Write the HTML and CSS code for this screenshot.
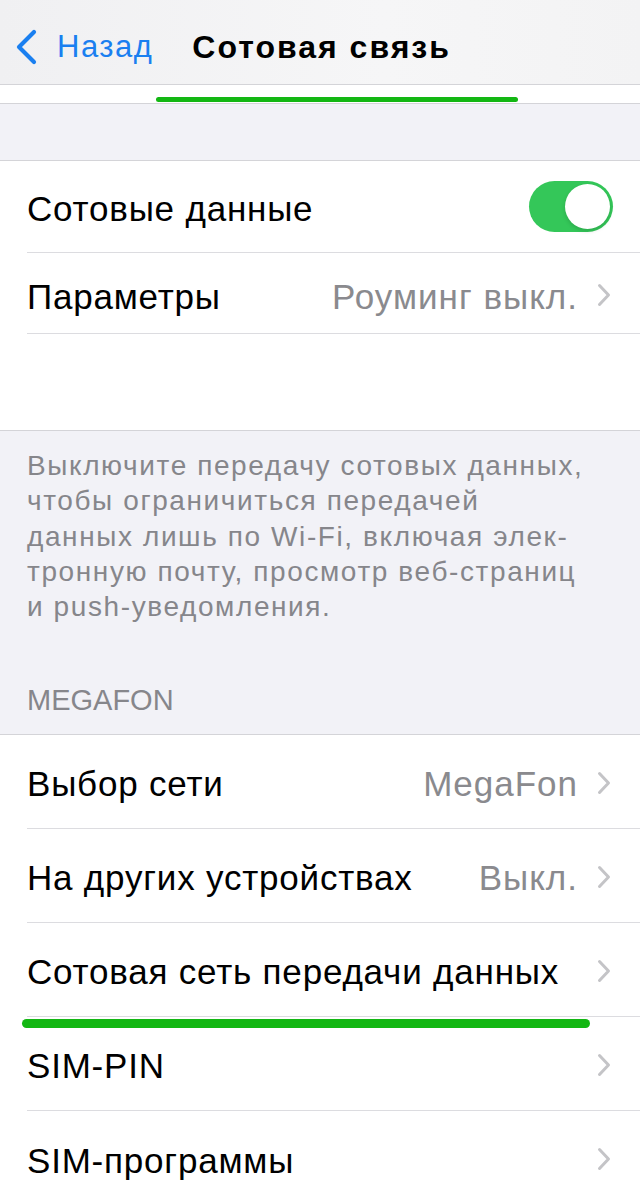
FILE: index.html
```html
<!DOCTYPE html>
<html lang="ru">
<head>
<meta charset="utf-8">
<link rel="stylesheet" href="styles.css">
</head>
<body>
<div class="page">
  <header class="nav">
    <div class="back">
      <svg class="back-chev" width="24" height="36" viewBox="0 0 24 36"><path d="M20 3 L5 18 L20 33" fill="none" stroke="#1a7ff0" stroke-width="4.2" stroke-linecap="round" stroke-linejoin="round"/></svg>
      <span class="back-text">Назад</span>
    </div>
    <div class="title">Сотовая связь</div>
  </header>
  <div class="strip"><span class="mark mark-top"></span></div>
  <div class="spacer"></div>

  <section class="group">
    <div class="row row-a">
      <span class="label">Сотовые данные</span>
      <span class="toggle"><span class="knob"></span></span>
    </div>
    <div class="row row-b">
      <span class="label">Параметры</span>
      <span class="value">Роуминг выкл.</span>
      <svg class="chev" width="14" height="24" viewBox="0 0 14 24"><path d="M2.5 2.5 L11.5 12 L2.5 21.5" fill="none" stroke="#c4c4c7" stroke-width="3" stroke-linecap="round" stroke-linejoin="round"/></svg>
    </div>
    <div class="row row-c"></div>
  </section>

  <div class="footer">Выключите передачу сотовых данных,<br>чтобы ограничиться передачей<br>данных лишь по Wi-Fi, включая элек-<br>тронную почту, просмотр веб-страниц<br>и push-уведомления.</div>

  <div class="section-head">MEGAFON</div>

  <section class="group">
    <div class="row">
      <span class="label">Выбор сети</span>
      <span class="value">MegaFon</span>
      <svg class="chev" width="14" height="24" viewBox="0 0 14 24"><path d="M2.5 2.5 L11.5 12 L2.5 21.5" fill="none" stroke="#c4c4c7" stroke-width="3" stroke-linecap="round" stroke-linejoin="round"/></svg>
    </div>
    <div class="row">
      <span class="label">На других устройствах</span>
      <span class="value">Выкл.</span>
      <svg class="chev" width="14" height="24" viewBox="0 0 14 24"><path d="M2.5 2.5 L11.5 12 L2.5 21.5" fill="none" stroke="#c4c4c7" stroke-width="3" stroke-linecap="round" stroke-linejoin="round"/></svg>
    </div>
    <div class="row">
      <span class="label">Сотовая сеть передачи данных</span>
      <svg class="chev" width="14" height="24" viewBox="0 0 14 24"><path d="M2.5 2.5 L11.5 12 L2.5 21.5" fill="none" stroke="#c4c4c7" stroke-width="3" stroke-linecap="round" stroke-linejoin="round"/></svg>
      <span class="mark mark-bottom"></span>
    </div>
    <div class="row">
      <span class="label">SIM-PIN</span>
      <svg class="chev" width="14" height="24" viewBox="0 0 14 24"><path d="M2.5 2.5 L11.5 12 L2.5 21.5" fill="none" stroke="#c4c4c7" stroke-width="3" stroke-linecap="round" stroke-linejoin="round"/></svg>
    </div>
    <div class="row">
      <span class="label">SIM-программы</span>
      <svg class="chev" width="14" height="24" viewBox="0 0 14 24"><path d="M2.5 2.5 L11.5 12 L2.5 21.5" fill="none" stroke="#c4c4c7" stroke-width="3" stroke-linecap="round" stroke-linejoin="round"/></svg>
    </div>
  </section>
</div>
</body>
</html>
```

FILE: styles.css
```css
* { box-sizing: border-box; }
html, body { margin: 0; padding: 0; }
body {
  background: #f2f2f7;
  font-family: "Liberation Sans", Arial, sans-serif;
  color: #000;
  width: 640px;
  overflow: hidden;
}
.page { width: 640px; }

.nav {
  height: 85px;
  background: linear-gradient(90deg, #f0f0f2 0%, #f6f6f7 60%, #f3f3f4 100%);
  border-bottom: 1px solid #d4d4d8;
  display: flex;
  align-items: center;
  padding-left: 14px;
  padding-top: 10px;
}
.back { display: flex; align-items: center; }
.back-chev { display: block; }
.back-text {
  color: #1a7ff0;
  font-size: 31px;
  margin-left: 19px;
  letter-spacing: 1.5px;
}
.title {
  margin-left: 39px;
  font-size: 32px;
  font-weight: bold;
  letter-spacing: 2px;
}

.strip {
  height: 19px;
  background: #fff;
  border-bottom: 1px solid #d4d4d8;
  position: relative;
}
.mark {
  position: absolute;
  background: #13b713;
  border-radius: 5px;
}
.mark-top { left: 156px; width: 362px; top: 12px; height: 5px; }

.spacer { height: 56px; }

.group {
  background: #fff;
  border-top: 1px solid #d4d4d8;
  border-bottom: 1px solid #d4d4d8;
}
.row {
  height: 94px;
  margin-left: 27px;
  padding-right: 29px;
  padding-top: 5px;
  display: flex;
  align-items: center;
  border-bottom: 1px solid #dcdce0;
  position: relative;
}
.row:last-child { border-bottom: none; }
.row-a { height: 92px; padding-top: 4px; }
.row-b { height: 81px; padding-top: 7px; }
.row-c { height: 96px; }

.label {
  font-size: 35px;
  flex: 1;
  white-space: nowrap;
  letter-spacing: 0.8px;
}
.value {
  font-size: 35px;
  color: #8a8a8e;
  margin-right: 19px;
  white-space: nowrap;
  letter-spacing: 1px;
}
.chev { display: block; flex: none; margin-top: -3px; }
.toggle {
  width: 84px;
  height: 51px;
  border-radius: 26px;
  background: #34c759;
  position: relative;
  margin-right: -2px;
  margin-top: -4px;
}
.knob {
  position: absolute;
  right: 3px;
  top: 3px;
  width: 45px;
  height: 45px;
  border-radius: 50%;
  background: #fff;
  box-shadow: 0 2px 4px rgba(0,0,0,0.15);
}
.mark-bottom { left: -5px; width: 568px; bottom: -12px; height: 9px; z-index: 2; }

.footer {
  padding: 17px 27px 0;
  font-size: 28px;
  line-height: 35.3px;
  color: #86868b;
  letter-spacing: 1.6px;
  white-space: nowrap;
}
.section-head {
  padding: 61px 27px 19px;
  font-size: 29px;
  color: #86868b;
  line-height: 30px;
}
```
